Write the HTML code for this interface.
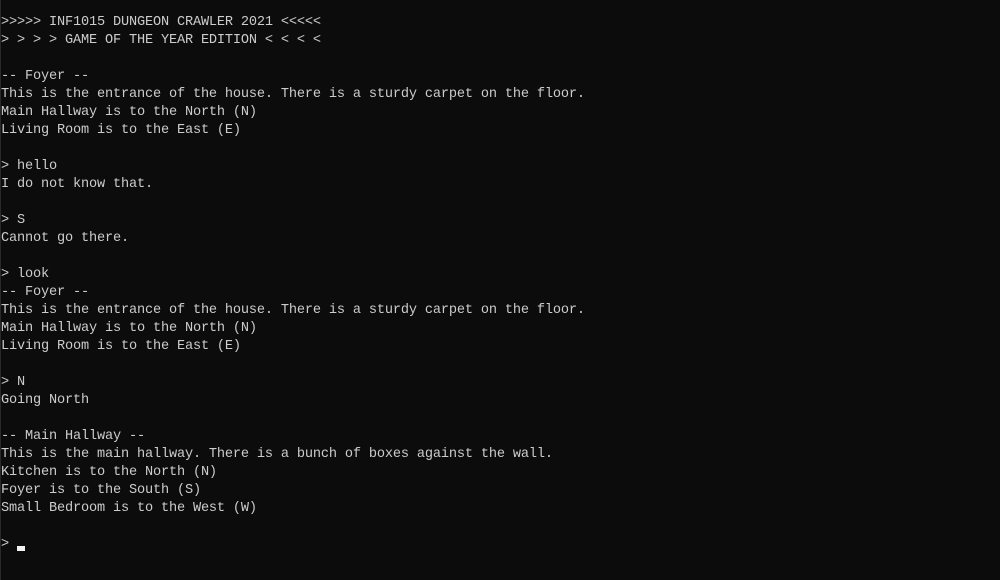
<!DOCTYPE html>
<html><head><meta charset="utf-8"><style>
html,body{margin:0;padding:0;background:#0c0c0c;width:1000px;height:580px;overflow:hidden}
body{border-left:1px solid #2a2a2a;box-sizing:border-box}
pre{margin:0;position:absolute;left:1px;top:14px;font-family:"Liberation Mono",monospace;font-size:13.6px;letter-spacing:-0.16px;line-height:18px;color:#cccccc;white-space:pre}
.cur{position:absolute;left:17px;top:546px;width:8px;height:5px;background:#f2f2f2}
</style></head><body><pre>&gt;&gt;&gt;&gt;&gt; INF1015 DUNGEON CRAWLER 2021 &lt;&lt;&lt;&lt;&lt;
&gt; &gt; &gt; &gt; GAME OF THE YEAR EDITION &lt; &lt; &lt; &lt;

-- Foyer --
This is the entrance of the house. There is a sturdy carpet on the floor.
Main Hallway is to the North (N)
Living Room is to the East (E)

&gt; hello
I do not know that.

&gt; S
Cannot go there.

&gt; look
-- Foyer --
This is the entrance of the house. There is a sturdy carpet on the floor.
Main Hallway is to the North (N)
Living Room is to the East (E)

&gt; N
Going North

-- Main Hallway --
This is the main hallway. There is a bunch of boxes against the wall.
Kitchen is to the North (N)
Foyer is to the South (S)
Small Bedroom is to the West (W)

&gt; </pre><div class="cur"></div></body></html>
